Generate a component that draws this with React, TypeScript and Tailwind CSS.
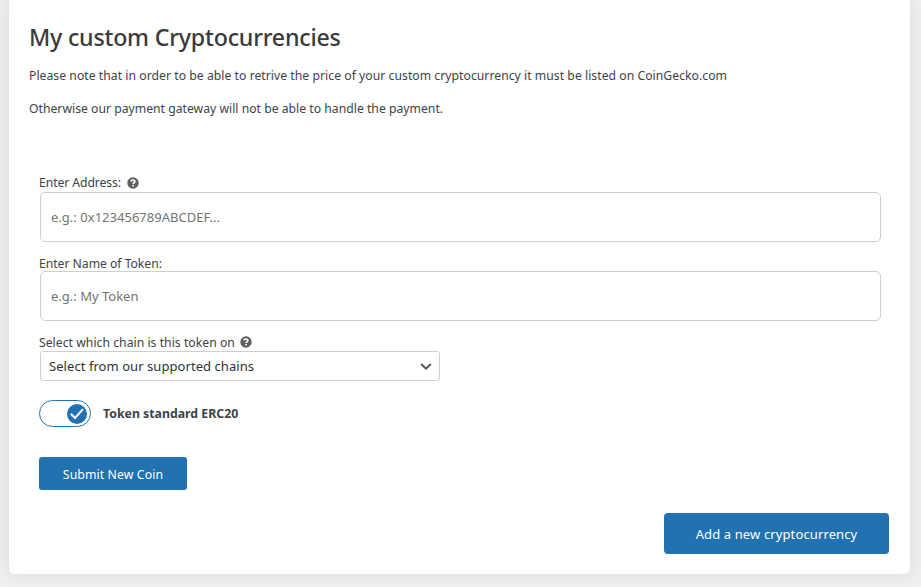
import type { ReactNode } from "react";

function HelpIcon() {
  return (
    <svg className="-mt-px block h-[12px] w-[12px]" viewBox="0 0 12 12" fill="none">
      <circle cx="6" cy="6" r="5.7" fill="#5f5f5f" />
      <path d="M4 4.6C4 2.4 7.9 2.4 7.9 4.6C7.9 5.8 6.1 5.7 6.1 7.1" stroke="#fff" strokeWidth="1.6" />
      <rect x="5.2" y="7.9" width="1.8" height="1.5" fill="#fff" />
    </svg>
  );
}

function Label({ children, help }: { children: ReactNode; help?: boolean }) {
  return (
    <div className="flex h-[18px] items-center gap-[5.5px] text-[12.2px] leading-[18px] whitespace-nowrap">
      {children}
      {help && <HelpIcon />}
    </div>
  );
}

export default function App() {
  return (
    <div className="h-[587px] w-[921px] overflow-hidden bg-[#f0f0f0] px-[9px] font-['Noto_Sans',sans-serif] text-[#3c434a]">
      <main className="mr-[2px] flex h-[574px] flex-col rounded-b-[5px] bg-white pl-[20px] shadow-[0_0_20px_rgba(0,0,0,0.1)]">
        <h1 className="mt-[21px] h-[32px] text-[23.2px] leading-[32px] font-medium whitespace-nowrap text-[#3a3a3a]">
          <span className="tracking-[-0.21px]">My custom Cryptocurrencies</span>
        </h1>
        <p className="mt-[13px] h-[20px] text-[12.2px] leading-[20px] whitespace-nowrap">
          <span className="tracking-[0.033px]">Please note that in order to be able to retrive the price of your custom cryptocurrency it must be listed on CoinGecko.com</span>
        </p>
        <p className="mt-[13px] h-[20px] text-[12.2px] leading-[20px] whitespace-nowrap">
          <span className="tracking-[0.01px]">Otherwise our payment gateway will not be able to handle the payment.</span>
        </p>

        <form className="mt-[55px] flex flex-col pl-[10px]">
          <Label help><span className="tracking-[-0.08px]">Enter Address:</span></Label>
          <input className="ml-px h-[50px] w-[841px] rounded-[5px] border border-[#cfcfcf] bg-white px-[10px] text-[13px] tracking-[0.02px] outline-none placeholder:text-[#6f7478]" placeholder="e.g.: 0x123456789ABCDEF..." />
          <div className="mt-[13px]">
            <Label><span className="tracking-[-0.03px]">Enter Name of Token:</span></Label>
          </div>
          <input className="-mt-[2px] ml-px h-[50px] w-[841px] rounded-[5px] border border-[#cfcfcf] bg-white px-[10px] text-[13px] outline-none placeholder:text-[#6f7478]" placeholder="e.g.: My Token" />
          <div className="mt-[12px]">
            <Label help><span className="pt-px tracking-[0.03px]">Select which chain is this token on</span></Label>
          </div>
          <div className="ml-px flex h-[30px] w-[400px] items-center justify-between rounded-[3px] border border-[#cfcfcf] pr-[7px] pl-[8px] text-[13px] whitespace-nowrap text-[#2c3338]">
            <span className="pt-[2px] tracking-[0.06px]">Select from our supported chains</span>
            <svg className="h-[12px] w-[12px]" viewBox="0 0 12 12" fill="none">
              <path d="M1.2 4L6 8.7L10.8 4" stroke="#50575e" strokeWidth="2" />
            </svg>
          </div>
          <div className="mt-[19px] flex h-[27px] items-center gap-[12px]">
            <div className="flex h-[27px] w-[52px] items-center justify-end rounded-full border border-[#2271b1] pr-[3px]">
              <svg className="h-[20px] w-[20px]" viewBox="0 0 20 20" fill="none">
                <circle cx="10" cy="10" r="10" fill="#2271b1" />
                <path d="M3.8 9.8L8 14L16 5.2" stroke="#fff" strokeWidth="2" />
              </svg>
            </div>
            <span className="pt-px text-[12.3px] font-bold whitespace-nowrap">Token standard ERC20</span>
          </div>
          <button type="button" className="mt-[30px] h-[33px] w-[148px] rounded-[3px] bg-[#2271b1] pt-[3px] text-[12.3px] tracking-[0.08px] whitespace-nowrap text-white">Submit New Coin</button>
        </form>
        <button type="button" className="mt-[23px] mr-[21px] h-[41px] w-[225px] self-end rounded-[4px] bg-[#2271b1] pt-[2px] text-[13px] tracking-[0.12px] whitespace-nowrap text-white">Add a new cryptocurrency</button>
      </main>
    </div>
  );
}
